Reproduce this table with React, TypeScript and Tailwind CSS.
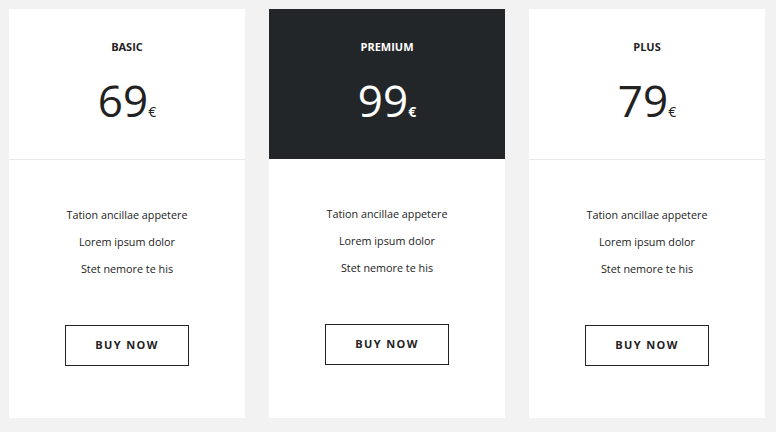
import React from "react";

type Plan = {
    name: string;
    price: string;
    featured?: boolean;
};

const plans: Plan[] = [
    { name: "BASIC", price: "69" },
    { name: "PREMIUM", price: "99", featured: true },
    { name: "PLUS", price: "79" },
];

const features = ["Tation ancillae appetere", "Lorem ipsum dolor", "Stet nemore te his"];

function PlanCard({ plan }: { plan: Plan }) {
    const dark = plan.featured;
    return (
        <div className="w-[236px] h-[409px] bg-white flex flex-col">
            {/* Header */}
            <div
                className={
                    dark
                        ? "h-[150px] bg-[#232629] text-white flex flex-col items-center pt-[30px]"
                        : "h-[151px] border-b border-[#e8e8e8] text-[#222] flex flex-col items-center pt-[30px]"
                }
            >
                <h3 className="text-[11px] leading-[16px] font-bold">{plan.name}</h3>
                <div className="mt-[23px] flex items-baseline">
                    <span className="text-[44px] leading-[44px] font-normal">{plan.price}</span>
                    <span className={dark ? "text-[14px] font-bold" : "text-[14px] font-normal"}>€</span>
                </div>
            </div>

            {/* Features */}
            <div className="flex flex-col items-center pt-[41px]">
                {features.map((f) => (
                    <p key={f} className="text-[10.8px] leading-[27px] text-[#222]">
                        {f}
                    </p>
                ))}
                <button className="mt-[43px] w-[124px] h-[41px] border border-[#222] text-[11px] font-bold tracking-[1.4px] text-[#222]">
                    BUY NOW
                </button>
            </div>
        </div>
    );
}

export default function App() {
    return (
        <div
            className="w-[776px] h-[432px] bg-[#f2f2f2] p-[9px] flex gap-6"
            style={{ fontFamily: '"Open Sans", sans-serif' }}
        >
            {plans.map((p) => (
                <PlanCard key={p.name} plan={p} />
            ))}
        </div>
    );
}
